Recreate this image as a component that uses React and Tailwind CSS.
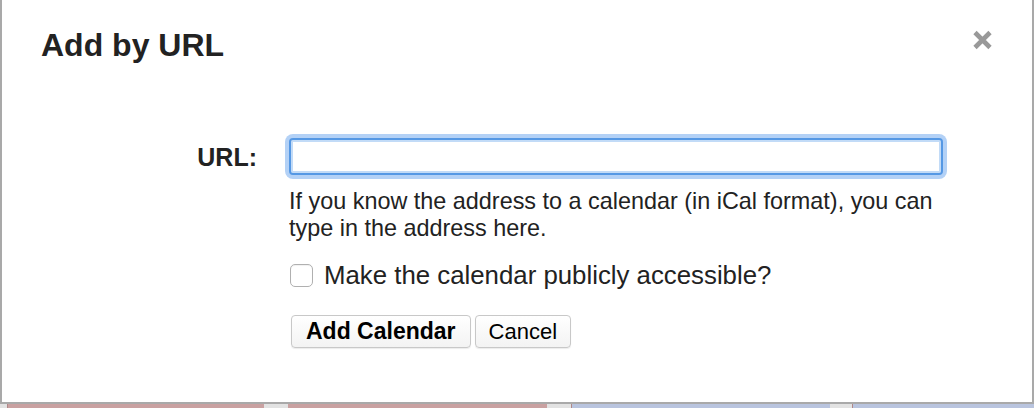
import React from 'react';

const App = () => {
  return (
    <div className="w-[1034px] h-[408px] bg-[#e2e2e2] overflow-hidden" style={{ fontFamily: '"Liberation Sans", Arial, sans-serif' }}>
      <div className="h-[404px] bg-white border-x-2 border-b-2 border-[#a9a9a9] flex flex-col">
        {/* header */}
        <div className="flex items-start justify-between pt-[29px] pl-[39px] pr-[39px]">
          <h1 className="text-[32px] leading-[32px] font-bold text-[#222]">Add by URL</h1>
          <button className="w-[21px] h-[22px]" aria-label="Close">
            <svg viewBox="0 0 21 22" width="21" height="22">
              <path d="M3 3.5 L18 18.5 M18 3.5 L3 18.5" stroke="#999" strokeWidth="4.6" strokeLinecap="butt" />
            </svg>
          </button>
        </div>

        {/* form */}
        <div className="grid grid-cols-[255px_654px] gap-x-[32px] mt-[77px]">
          <label className="text-right text-[25px] font-bold text-[#222] self-center leading-[30px] pt-[1px]">URL:</label>
          <input
            type="text"
            className="h-[37px] w-[654px] rounded-[4px] border-2 border-[#5598e4] bg-white outline-none shadow-[inset_0_0_0_2px_#c2dbf7,0_0_0_4px_#b3d1f6]"
          />

          <div />
          <div className="mt-[13px]">
            <p className="text-[23.4px] leading-[27px] text-[#222]">
              If you know the address to a calendar (in iCal format), you can type in the address here.
            </p>

            <label className="flex items-center mt-[18px] h-[30px]">
              <span className="w-[23px] h-[23px] rounded-[5px] border border-[#b0b0b0] bg-white ml-[1px] shadow-[inset_0_1px_1px_rgba(0,0,0,0.06)]" />
              <span className="ml-[11px] text-[25.8px] leading-[30px] text-[#222]">Make the calendar publicly accessible?</span>
            </label>

            <div className="flex gap-[4px] mt-[25px] ml-[2px]">
              <button className="h-[33px] px-[14px] rounded-[4px] border border-[#c8c8c8] bg-gradient-to-b from-white to-[#f3f3f3] shadow-[0_1px_1px_rgba(0,0,0,0.08)] text-[23px] font-bold text-black leading-[31px]">
                Add Calendar
              </button>
              <button className="h-[33px] px-[13px] rounded-[4px] border border-[#c8c8c8] bg-gradient-to-b from-white to-[#f3f3f3] shadow-[0_1px_1px_rgba(0,0,0,0.08)] text-[22px] text-black leading-[31px]">
                Cancel
              </button>
            </div>
          </div>
        </div>
      </div>

      {/* page behind the dialog */}
      <div className="flex h-[4px]">
        <div className="w-[7px] bg-[#e2e2e2]" />
        <div className="w-[257px] bg-[#c9a1a1] border-l border-[#b08888]" />
        <div className="w-[24px] bg-[#e2e2e2]" />
        <div className="w-[259px] bg-[#c9a1a1]" />
        <div className="w-[24px] bg-[#e2e2e2]" />
        <div className="w-[259px] bg-[#b9c4de] border-l border-[#b08888]" />
        <div className="w-[22px] bg-[#e2e2e2]" />
        <div className="flex-1 bg-[#b9c4de] border-l border-[#b08888]" />
      </div>
    </div>
  );
};

export default App;
